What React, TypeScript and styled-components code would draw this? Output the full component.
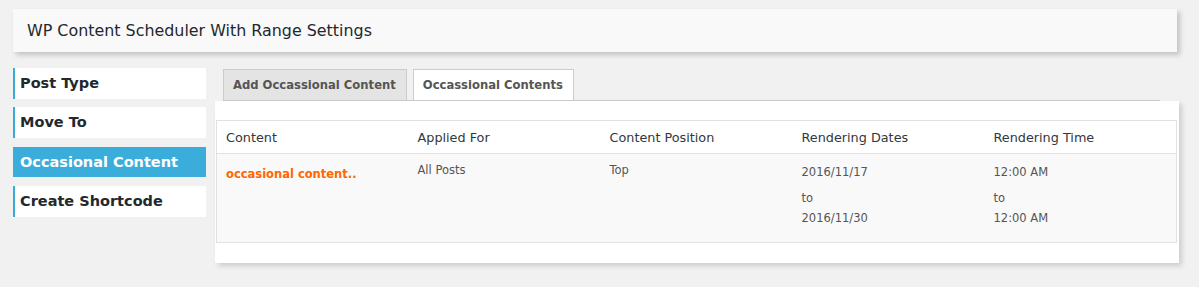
import React from "react";
import styled, { createGlobalStyle } from "styled-components";

const Global = createGlobalStyle`
  html, body { margin: 0; padding: 0; background: #f1f1f1; }
  body { font-family: "DejaVu Sans", "Liberation Sans", sans-serif; color: #32373c; }
`;

const Page = styled.div`
  padding: 9px 22px 0 13px;
  height: 287px;
  box-sizing: border-box;
`;

const Header = styled.div`
  height: 43px;
  background: #f9f9f9;
  box-shadow: 3px 3px 5px rgba(0, 0, 0, 0.2);
  display: flex;
  align-items: center;
  padding-left: 14px;
  font-size: 15.9px;
  color: #23282d;
  margin-bottom: 16px;
`;

const Body = styled.div`
  display: flex;
  align-items: flex-start;
`;

const Sidebar = styled.nav`
  width: 193px;
  flex-shrink: 0;
  display: flex;
  flex-direction: column;
  gap: 8.7px;
`;

const NavItem = styled.div<{ $active?: boolean }>`
  height: 30.7px;
  line-height: 30.7px;
  box-sizing: border-box;
  padding-left: ${(p) => (p.$active ? "7px" : "5px")};
  border-left: ${(p) => (p.$active ? "none" : "2px solid #3aaad9")};
  background: ${(p) => (p.$active ? "#3badda" : "#fff")};
  color: ${(p) => (p.$active ? "#fff" : "#23282d")};
  font-weight: bold;
  font-size: 14.5px;
`;

const Main = styled.div`
  width: 964px;
  flex-shrink: 0;
  margin-left: 9px;
`;

const TabBar = styled.div`
  display: flex;
  gap: 6px;
  margin: 1px 19px 0 8px;
  border-bottom: 1px solid #ccc;
`;

const Tab = styled.div<{ $active?: boolean }>`
  height: 31px;
  line-height: 30px;
  box-sizing: border-box;
  padding: 0 10px 0 9px;
  border: 1px solid #ccc;
  border-bottom: none;
  background: ${(p) => (p.$active ? "#fff" : "#e4e4e4")};
  color: #555;
  font-weight: bold;
  font-size: 11.6px;
`;

const Panel = styled.div`
  background: #fff;
  padding: 19px 2px 20px 1px;
  box-shadow: 3px 3px 5px rgba(0, 0, 0, 0.15);
`;

const Table = styled.table`
  width: 100%;
  table-layout: fixed;
  border-collapse: collapse;
  border: 1px solid #e1e1e1;
`;

const HeadCell = styled.th`
  text-align: left;
  font-weight: normal;
  font-size: 12.8px;
  color: #32373c;
  height: 32px;
  padding: 0 10px 0 9px;
  background: #fff;
  border-bottom: 1px solid #e1e1e1;
`;

const Cell = styled.td<{ $top: number }>`
  vertical-align: top;
  background: #f9f9f9;
  padding: ${(p) => p.$top}px 10px 0 9px;
  height: 89px;
  box-sizing: border-box;
  font-size: 11.5px;
  line-height: 20px;
  color: #555;
`;

const Highlight = styled.span`
  color: #ff6600;
  font-weight: bold;
`;

const Line = styled.div<{ $gap?: number }>`
  margin-top: ${(p) => p.$gap ?? 0}px;
`;

export default function App() {
  const nav = ["Post Type", "Move To", "Occasional Content", "Create Shortcode"];
  return (
    <>
      <Global />
      <Page>
        <Header>WP Content Scheduler With Range Settings</Header>
        <Body>
          <Sidebar>
            {nav.map((n) => (
              <NavItem key={n} $active={n === "Occasional Content"}>
                {n}
              </NavItem>
            ))}
          </Sidebar>
          <Main>
            <TabBar>
              <Tab>Add Occassional Content</Tab>
              <Tab $active>Occassional Contents</Tab>
            </TabBar>
            <Panel>
              <Table>
                <thead>
                  <tr>
                    <HeadCell>Content</HeadCell>
                    <HeadCell>Applied For</HeadCell>
                    <HeadCell>Content Position</HeadCell>
                    <HeadCell>Rendering Dates</HeadCell>
                    <HeadCell>Rendering Time</HeadCell>
                  </tr>
                </thead>
                <tbody>
                  <tr>
                    <Cell $top={10}>
                      <Highlight>occasional content..</Highlight>
                    </Cell>
                    <Cell $top={6}>All Posts</Cell>
                    <Cell $top={6}>Top</Cell>
                    <Cell $top={8}>
                      <Line>2016/11/17</Line>
                      <Line $gap={6}>to</Line>
                      <Line>2016/11/30</Line>
                    </Cell>
                    <Cell $top={8}>
                      <Line>12:00 AM</Line>
                      <Line $gap={6}>to</Line>
                      <Line>12:00 AM</Line>
                    </Cell>
                  </tr>
                </tbody>
              </Table>
            </Panel>
          </Main>
        </Body>
      </Page>
    </>
  );
}
